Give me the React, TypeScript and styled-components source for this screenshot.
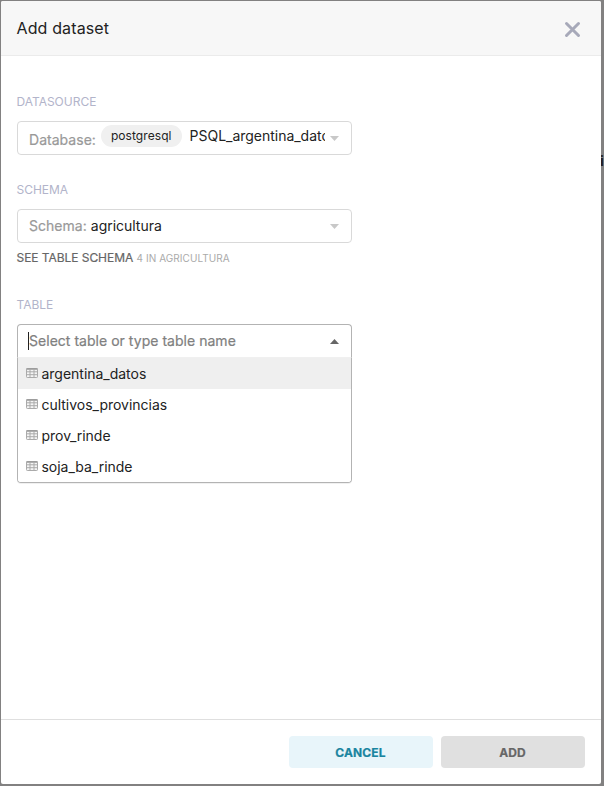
import React from "react";
import styled, { createGlobalStyle, css } from "styled-components";

const GlobalStyle = createGlobalStyle`
  * { box-sizing: border-box; }
  html, body { margin: 0; padding: 0; }
  body {
    font-family: Inter, "Liberation Sans", sans-serif;
    font-size: 14px;
    color: #323232;
    overflow: hidden;
  }
`;

const Backdrop = styled.div`
  position: relative;
  width: 604px;
  height: 786px;
  padding: 1px 3px 2px 1px;
  background: #828181;
  overflow: hidden;
`;

const PageText = styled.span`
  position: absolute;
  left: 600px;
  top: 152px;
  font-size: 14px;
  line-height: 17px;
  font-weight: 700;
  color: #1b1b1b;
`;

const Dialog = styled.section`
  position: relative;
  display: flex;
  flex-direction: column;
  width: 600px;
  height: 783px;
  background: #fff;
  border-radius: 2px;
  overflow: hidden;
`;

const Header = styled.header`
  display: flex;
  align-items: center;
  justify-content: space-between;
  height: 55px;
  padding: 0 20px 0 15.5px;
  background: #f7f7f7;
  border-bottom: 1px solid #ebebeb;
`;

const Title = styled.h4`
  margin: 0;
  font-size: 16px;
  line-height: 20px;
  font-weight: 400;
  letter-spacing: 0.13px;
  color: #222;
`;

const CloseButton = styled.button`
  display: flex;
  margin-top: 3px;
  padding: 0;
  border: 0;
  background: none;
  color: #a7a9b9;
`;

const Body = styled.main`
  flex: 1;
  padding: 36px 16px 0;
`;

const Field = styled.div<{ $after?: number }>`
  width: 335px;
  margin-bottom: ${(p) => p.$after ?? 25}px;
`;

const FieldLabel = styled.div`
  height: 20px;
  margin: 0 0 9px -0.5px;
  font-size: 12px;
  line-height: 20px;
  letter-spacing: -0.02px;
  color: #b2b4ca;
`;

const Select = styled.div<{ $open?: boolean }>`
  display: flex;
  align-items: center;
  height: 34px;
  padding: 0 12px 0 11px;
  border: 1px solid #d9d9d9;
  border-radius: 4px;
  ${(p) =>
    p.$open &&
    css`
      height: 33px;
      padding-left: 10px;
      border-color: #b3b3b3;
      border-bottom: 0;
      border-radius: 4px 4px 0 0;
    `}
`;

const SelectValue = styled.div`
  display: flex;
  align-items: center;
  flex: 1;
  min-width: 0;
  height: 30px;
  margin-right: 5px;
  overflow: hidden;
  white-space: nowrap;
`;

const Prefix = styled.span<{ $drop?: number }>`
  margin: ${(p) => p.$drop ?? 0}px 4px 0 0;
  color: #999;
  line-height: 20px;
  letter-spacing: 0.03px;
  -webkit-text-stroke: 0.2px #999;
`;

const Value = styled.span<{ $lift?: number }>`
  line-height: 20px;
  letter-spacing: -0.02px;
  color: #222;
  margin-bottom: ${(p) => p.$lift ?? 0}px;
`;

const Pill = styled.span`
  flex: none;
  height: 22px;
  margin: 0 8px 5px 1px;
  padding: 0 10px;
  border-radius: 11px;
  background: #f0f0f0;
  font-size: 12px;
  line-height: 22px;
  letter-spacing: 0.07px;
  color: #222;
`;

const Caret = styled.span`
  width: 1px;
  height: 18px;
  background: #222;
`;

const Placeholder = styled.span`
  color: #808080;
  line-height: 20px;
  letter-spacing: 0.03px;
  -webkit-text-stroke: 0.2px #808080;
`;

const SchemaNote = styled.div`
  height: 20px;
  margin: 5px 0 0 -0.5px;
  font-size: 12px;
  line-height: 20px;
  letter-spacing: -0.05px;
  color: #666;
  -webkit-text-stroke: 0.2px #666;
`;

const NoteCount = styled.small`
  font-size: 10px;
  letter-spacing: 0.07px;
  color: #aaa;
  -webkit-text-stroke: 0;
`;

const Menu = styled.ul`
  margin: 0;
  padding: 0;
  list-style: none;
  border: 1px solid #b3b3b3;
  border-top-color: #f0f0f0;
  border-radius: 0 0 4px 4px;
  overflow: hidden;
  box-shadow: 0 1px 0 rgba(0, 0, 0, 0.06);
`;

const Option = styled.li<{ $active?: boolean }>`
  display: flex;
  align-items: center;
  height: 31px;
  padding: 1px 8px 0;
  gap: 3.5px;
  color: #222;
  line-height: 20px;
  letter-spacing: -0.02px;
  background: ${(p) => (p.$active ? "#efefef" : "#fff")};
`;

const Footer = styled.footer`
  display: flex;
  justify-content: flex-end;
  gap: 8px;
  height: 65px;
  padding: 16px;
  border-top: 1px solid #dfdfdf;
`;

const Button = styled.button<{ $muted?: boolean }>`
  width: 144px;
  height: 32px;
  padding: 0 1px 0 0;
  border: 0;
  border-radius: 4px;
  font-family: inherit;
  font-size: 12px;
  font-weight: 700;
  letter-spacing: 0.15px;
  background: ${(p) => (p.$muted ? "#e0e0e0" : "#e8f5fa")};
  color: ${(p) => (p.$muted ? "#666" : "#1a85a0")};
  -webkit-text-stroke: 0.2px currentColor;
`;

const ArrowSvg = styled.svg`
  display: block;
  flex: none;
`;

const IconSvg = styled.svg`
  display: block;
  flex: none;
  margin-top: -2px;
`;

function Arrow({ up }: { up?: boolean }) {
  return (
    <ArrowSvg width="9" height="5" viewBox="0 0 9 5">
      <path d={up ? "M0 5L4.5 0L9 5Z" : "M0 0H9L4.5 5Z"} fill={up ? "#666" : "#c8c8c8"} />
    </ArrowSvg>
  );
}

function TableIcon() {
  return (
    <IconSvg width="12" height="10" viewBox="0 0 12 10">
      <rect x="0.5" y="0.5" width="11" height="9" rx="0.8" fill="#f4f4f4" stroke="#aaa" />
      <path d="M0.5 1H11.5" stroke="#999" strokeWidth="1.6" />
      <path d="M0.5 3.8H11.5M0.5 6.7H11.5M4 1V9M8 1V9" stroke="#aaa" strokeWidth="1" />
    </IconSvg>
  );
}

const tables = ["argentina_datos", "cultivos_provincias", "prov_rinde", "soja_ba_rinde"];

export default function App() {
  return (
    <>
      <GlobalStyle />
      <Backdrop>
        <PageText>i</PageText>
        <Dialog>
          <Header>
            <Title>Add dataset</Title>
            <CloseButton aria-label="Close">
              <svg width="17" height="17" viewBox="0 0 17 17">
                <path d="M2.5 2.5L14.5 14.5M14.5 2.5L2.5 14.5" stroke="currentColor" strokeWidth="3" strokeLinecap="round" />
              </svg>
            </CloseButton>
          </Header>
          <Body>
            <Field>
              <FieldLabel>DATASOURCE</FieldLabel>
              <Select>
                <SelectValue>
                  <Prefix $drop={4}>Database:</Prefix>
                  <Pill>postgresql</Pill>
                  <Value $lift={5}>PSQL_argentina_datos</Value>
                </SelectValue>
                <Arrow />
              </Select>
            </Field>
            <Field $after={27}>
              <FieldLabel>SCHEMA</FieldLabel>
              <Select>
                <SelectValue>
                  <Prefix>Schema:</Prefix>
                  <Value>agricultura</Value>
                </SelectValue>
                <Arrow />
              </Select>
              <SchemaNote>
                SEE TABLE SCHEMA <NoteCount>4 IN AGRICULTURA</NoteCount>
              </SchemaNote>
            </Field>
            <Field>
              <FieldLabel>TABLE</FieldLabel>
              <Select $open>
                <SelectValue>
                  <Caret />
                  <Placeholder>Select table or type table name</Placeholder>
                </SelectValue>
                <Arrow up />
              </Select>
              <Menu>
                {tables.map((name, i) => (
                  <Option key={name} $active={i === 0}>
                    <TableIcon />
                    {name}
                  </Option>
                ))}
              </Menu>
            </Field>
          </Body>
          <Footer>
            <Button>CANCEL</Button>
            <Button $muted>ADD</Button>
          </Footer>
        </Dialog>
      </Backdrop>
    </>
  );
}
